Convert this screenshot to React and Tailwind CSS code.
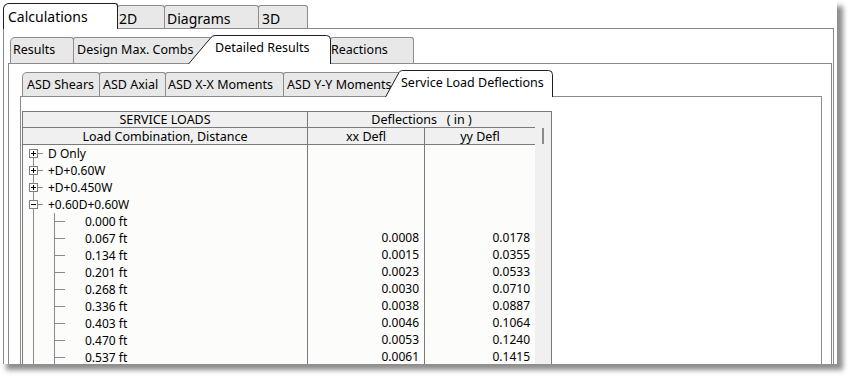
import React from "react";

const rows = [
  { label: "D Only", sign: "+", first: true },
  { label: "+D+0.60W", sign: "+" },
  { label: "+D+0.450W", sign: "+" },
  { label: "+0.60D+0.60W", sign: "-" },
  { label: "0.000 ft", xx: "", yy: "" },
  { label: "0.067 ft", xx: "0.0008", yy: "0.0178" },
  { label: "0.134 ft", xx: "0.0015", yy: "0.0355" },
  { label: "0.201 ft", xx: "0.0023", yy: "0.0533" },
  { label: "0.268 ft", xx: "0.0030", yy: "0.0710" },
  { label: "0.336 ft", xx: "0.0038", yy: "0.0887" },
  { label: "0.403 ft", xx: "0.0046", yy: "0.1064" },
  { label: "0.470 ft", xx: "0.0053", yy: "0.1240" },
  { label: "0.537 ft", xx: "0.0061", yy: "0.1415" },
];

const LINE = "#8a8a8a";

const RootLines = ({ sign, first }) => (
  <svg width="25" height="17" className="shrink-0" shapeRendering="crispEdges">
    {!first && <line x1="10.5" y1="0" x2="10.5" y2="4" stroke={LINE} />}
    <line x1="10.5" y1="13" x2="10.5" y2="17" stroke={LINE} />
    <line x1="15" y1="8.5" x2="20" y2="8.5" stroke={LINE} />
    <rect x="6.5" y="4.5" width="8" height="8" fill="#fff" stroke="#7f7f7f" />
    <line x1="8" y1="8.5" x2="13" y2="8.5" stroke="#000" />
    {sign === "+" && <line x1="10.5" y1="6" x2="10.5" y2="11" stroke="#000" />}
  </svg>
);

const ChildLines = () => (
  <svg width="62" height="17" className="shrink-0" shapeRendering="crispEdges">
    <line x1="10.5" y1="0" x2="10.5" y2="17" stroke={LINE} />
    <line x1="31.5" y1="0" x2="31.5" y2="17" stroke={LINE} />
    <line x1="32" y1="8.5" x2="42" y2="8.5" stroke={LINE} />
  </svg>
);

const tab2 = "h-[26px] bg-[#e8e8e8] border border-b-0 border-[#8c8c8c] rounded-t-[3px] pt-[4px] text-[12.5px] leading-[16px] whitespace-nowrap overflow-hidden";
const tab3 = "h-[24px] bg-[#e8e8e8] border border-b-0 border-[#8c8c8c] rounded-t-[3px] pt-[4px] text-[12.5px] leading-[16px] whitespace-nowrap overflow-hidden";
const tab1 = "h-[23px] bg-[#e8e8e8] border border-b-0 border-[#8c8c8c] rounded-t-[3px] pt-[4px] text-[14px] leading-[18px] whitespace-nowrap";

export default function App() {
  return (
    <div className="w-[853px] h-[380px] bg-white font-['Noto_Sans',sans-serif] text-black">
      <div className="w-[837px] h-[364px] bg-white overflow-hidden shadow-[6px_6px_5px_rgba(0,0,0,0.45)] pt-[3px] pl-[3px]">
        {/* top level tabs */}
        <div className="flex items-end h-[25px] relative z-10">
          <div className="relative z-10 w-[115px] h-[26px] -mb-px bg-white border border-b-0 border-[#1f1f1f] rounded-tl-[6px] rounded-tr-[3px] pl-[4px] pt-[4px] text-[14px] leading-[18px]">
            Calculations
          </div>
          <div className={`${tab1} -ml-px w-[48px] pl-[1px]`}>2D</div>
          <div className={`${tab1} -ml-px w-[95px] pl-[2px]`}>Diagrams</div>
          <div className={`${tab1} -ml-px w-[50px] pl-[3px]`}>3D</div>
        </div>

        <div className="w-[831px] h-[345px] border border-[#8a8a8a] pl-[4px] pr-[1px] pt-[6px]">
          {/* second level tabs */}
          <div className="flex items-end h-[28px] relative z-10">
            <div className={`${tab2} ml-[2px] w-[64px] rounded-tl-[5px] pl-[2px]`}>Results</div>
            <div className={`${tab2} -ml-px w-[143px] pl-[3px]`}>Design Max. Combs</div>
            <div className="relative z-10 -ml-[28px] w-[143px] h-[29px] -mb-px">
              <svg width="143" height="29" className="absolute inset-0">
                <path
                  d="M0.5 29 L23 2.5 Q24.5 0.5 27 0.5 L138.5 0.5 Q142.5 0.5 142.5 4.5 L142.5 29"
                  fill="#fff"
                  stroke="#1f1f1f"
                />
              </svg>
              <div className="relative pl-[27px] pt-[5px] text-[12.5px] leading-[16px] whitespace-nowrap">Detailed Results</div>
            </div>
            <div className={`${tab2} -ml-px w-[84px] pl-0`}>Reactions</div>
          </div>

          <div className="w-[824px] h-[320px] border border-[#8a8a8a] pl-[11px] pr-[9px] pt-[6px]">
            {/* third level tabs */}
            <div className="flex items-end h-[26px] relative z-10">
              <div className={`${tab3} ml-[2px] w-[78px] rounded-tl-[5px] pl-[4px]`}>ASD Shears</div>
              <div className={`${tab3} -ml-px w-[67px] pl-[3px]`}>ASD Axial</div>
              <div className={`${tab3} -ml-px w-[119px] pl-[2px]`}>ASD X-X Moments</div>
              <div className={`${tab3} -ml-px w-[118px] pl-[3px]`}>ASD Y-Y Moments</div>
              <div className="relative z-10 -ml-[16px] w-[168px] h-[27px] -mb-px">
                <svg width="168" height="27" className="absolute inset-0">
                  <path
                    d="M0.5 27 L14 2.5 Q15.2 0.5 17.5 0.5 L163.5 0.5 Q167.5 0.5 167.5 4.5 L167.5 27"
                    fill="#fff"
                    stroke="#1f1f1f"
                  />
                </svg>
                <div className="relative pl-[16px] pt-[5px] text-[12.5px] leading-[16px] whitespace-nowrap">Service Load Deflections</div>
              </div>
            </div>

            <div className="w-[802px] h-[290px] border border-[#8a8a8a] pl-[1px] pt-[14px]">
              {/* grid */}
              <div className="w-[530px] h-[270px] border border-[#7a7a7a] flex text-[12px]">
                <div className="w-[512px] flex flex-col bg-[#fcfcfa]">
                  <div className="grid grid-cols-[285px_227px] h-[16px] bg-[#f0f0f0] border-b border-[#7a7a7a] leading-[15px] text-[12.5px]">
                    <div className="border-r border-[#7a7a7a] text-center">SERVICE LOADS</div>
                    <div className="text-center whitespace-pre">Deflections   ( in )</div>
                  </div>
                  <div className="grid grid-cols-[285px_117px_110px] h-[17px] bg-[#f0f0f0] border-b border-[#7a7a7a] leading-[16px] text-[12.5px]">
                    <div className="border-r border-[#7a7a7a] text-center pt-px">Load Combination, Distance</div>
                    <div className="border-r border-[#7a7a7a] text-center pt-px">xx Defl</div>
                    <div className="text-center pt-px">yy Defl</div>
                  </div>
                  <div className="grid grid-cols-[285px_117px_110px] flex-1">
                    <div className="border-r border-[#7a7a7a]">
                      {rows.map((r) => (
                        <div key={r.label} className="h-[17px] flex items-center leading-[16px] whitespace-nowrap">
                          {r.sign ? <RootLines sign={r.sign} first={r.first} /> : <ChildLines />}
                          <span>{r.label}</span>
                        </div>
                      ))}
                    </div>
                    <div className="border-r border-[#7a7a7a]">
                      {rows.map((r) => (
                        <div key={r.label} className="h-[17px] leading-[16px] text-right pr-[5px]">{r.xx}</div>
                      ))}
                    </div>
                    <div>
                      {rows.map((r) => (
                        <div key={r.label} className="h-[17px] leading-[16px] text-right pr-[5px]">{r.yy}</div>
                      ))}
                    </div>
                  </div>
                </div>
                <div className="w-[16px] bg-[#f0f0f0] pl-[7px] pt-[16px]">
                  <div className="w-[2px] h-[16px] bg-[#8a8a8a]" />
                </div>
              </div>
            </div>
          </div>
        </div>
      </div>
    </div>
  );
}
